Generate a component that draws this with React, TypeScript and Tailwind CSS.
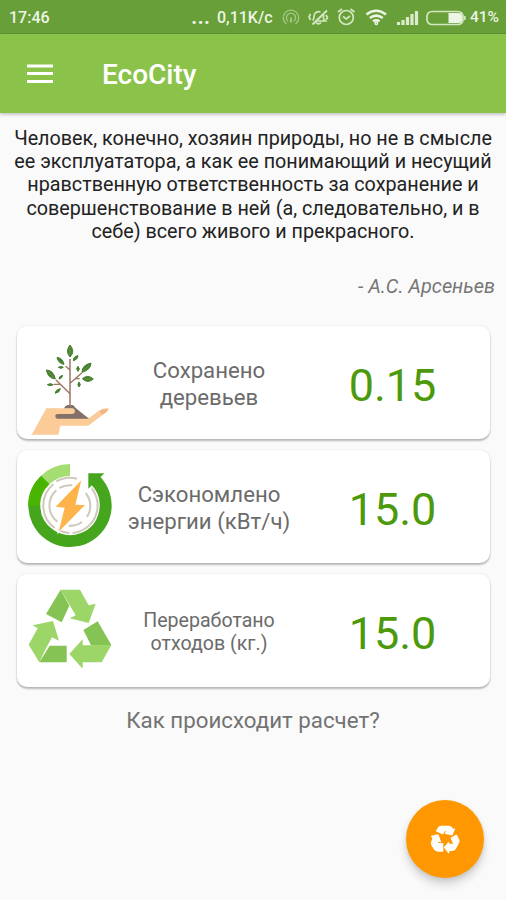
import type { ReactNode } from "react";

function StatusIcons() {
  return (
    <svg width="184" height="33" viewBox="282 0 184 33" className="shrink-0" fill="none" stroke="#d3e8c2" strokeWidth="1.7">
      {/* hotspot */}
      <g stroke="#a4ca86" strokeWidth="1.3">
        <path d="M286.500 24a7.700 7.700 0 1 1 9 0" />
        <path d="M288.300 21.500a4.600 4.600 0 1 1 5.400 0" />
        <path d="M291 17.500v5" strokeWidth="2" />
      </g>
      {/* muted bell */}
      <path d="M312.500 20.500q1.500-1 1.500-4c0-3.500 3-5.500 6.500-4.500M323.500 14.500v3.500q0 2 1.500 3h-8M316 22.500q2.500 2.500 5 0" />
      <path d="M327 10.500l-14.500 14" strokeWidth="2" />
      <path d="M310.500 14l-1.500 3 1.500 3M326 15l1.500 2.500-1.500 2.500" />
      {/* alarm clock */}
      <circle cx="346.300" cy="17.500" r="7" />
      <path d="M343 16.500l3.300 2.500 3.700-3M338 12l4-3M354.500 12l-4-3" />
      {/* wifi */}
      <g strokeWidth="2.500" stroke="#eef6e7">
        <path d="M366.500 14.500q9.500-7.500 19.500 0" />
        <path d="M369.800 18q6.300-4.800 13 0" />
        <path d="M373 21.300q3.300-2.200 6.600 0" />
        <circle cx="376.300" cy="23.300" r=".7" />
      </g>
      {/* signal */}
      <path d="M398.500 25v-3M403 25v-5M407.500 25v-8M412 25v-11M416.500 25v-14" strokeWidth="3.200" stroke="#dcecce" />
      {/* battery */}
      <rect x="427" y="11.500" width="36" height="13" rx="5" />
      <path d="M448.500 13h10q3.500 0 3.500 3v4q0 3-3.500 3h-10z" fill="#edf5e5" stroke="none" />
      <path d="M464.800 16v4" />
    </svg>
  );
}

function TreeIcon() {
  return (
    <svg width="100" height="113" viewBox="21 18 300 339" className="shrink-0">
      <path d="M109 265h78l12 7 38 23 29-23q13-8 30-7-1 10-20 21l-41 31h-84l-6 27H65z" fill="#fbcb98" />
      <path d="M270 272q12-5 24-5-1 8-19 18z" fill="#f2b483" />
      <path d="M162 265q3-9 12-10h13q5 1 9 8l41 33h-96q-5-1-5-7 0-7 8-7h42q8 0 9-7 0-9-10-10z" fill="#827069" />
      <g fill="none" stroke="#9b7460" strokeWidth="5">
        <path d="M180 117v140" stroke="#a58472" />
        <path d="M180 221l-42-41M150 193h-18M180 190l36-32M196 175l13 1M180 150l-13-11" strokeWidth="4" />
      </g>
      <g fill="#487f30" stroke="#487f30" strokeWidth="3" strokeLinejoin="round">
        <path d="M180 75c11 14 11 24 0 36-10-12-10-23 0-36" />
        <path d="M141 112q17 2 21 21-17-2-21-21M109 150q21 0 27 27-23-3-27-27" />
        <path d="M243 129q0 20-27 28 0-22 27-28M250 177q-17 15-33-1 17-14 33 1" />
        <path d="M204 107q0 11-14 15 0-13 14-15M145 142q8-5 15 0-7 6-15 0M204 139q8 8 0 15-8-8 0-15" />
        <path d="M158 166q-1 9-11 11 0-9 11-11M112 194q9-6 18 0-9 6-18 0M151 206q0 10-15 14 0-11 15-14M207 186q8 8 0 15-7-8 0-15" />
      </g>
      <path d="M180 80v25M114 155l18 18M238 135l-17 17M224 177h20" stroke="#79a45d" strokeWidth="2" />
    </svg>
  );
}

function EnergyIcon() {
  return (
    <svg width="100" height="113" viewBox="21 15 300 339" className="shrink-0">
      <g fill="none" strokeWidth="36">
        <path d="M257 107A107 107 0 1 1 73 180" stroke="#45a51d" />
        <path d="M72 182A107 107 0 0 1 107 104" stroke="#49b500" />
        <path d="M106 105A107 107 0 0 1 180 75" stroke="#a4dd71" />
      </g>
      <path d="M235 131V85h48l-15 15-14 20-7-1z" fill="#45a51d" />
      <g fill="none" stroke="#cfc8bb" strokeWidth="6">
        <path d="M139 109a83 83 0 0 1 62-8M245 130a83 83 0 0 1-57 134M178 264a83 83 0 0 1-35-10M134 249a83 83 0 0 1-4-131" />
        <path d="M148 129a61 61 0 0 1 39-8M227 144a61 61 0 0 1 4 72M216 231a61 61 0 0 1-40 11M142 230a61 61 0 0 1-3-94" />
      </g>
      <path d="M214 106l-77 79 27 3-18 72 79-80-29-1z" fill="#ffb44b" stroke="#fff" strokeWidth="5" paintOrder="stroke" />
    </svg>
  );
}

function RecycleIcon() {
  return (
    <svg width="100" height="113" viewBox="21 12 300 339" className="shrink-0">
      <g fill="#85c354">
        <path d="M152 59l26 48-23 50-47-25z" />
        <path d="M220 180l43-26 41 71-61 1z" />
        <path d="M88 277l31-50h51v50z" />
      </g>
      <g fill="#9cd669">
        <path d="M152 59h58l26 47 21-5-21 58-57-14 18-9-20-34z" />
        <path d="M304 225l-29 52h-57v19l-40-44 40-44v18z" />
        <path d="M88 277l-32-53 27-49-15-9 61-13 18 59-21-10-19 35z" />
      </g>
    </svg>
  );
}

function FabRecycle() {
  return (
    <svg width="30" height="30" viewBox="0 0 90 90" fill="#fff" stroke="#fff" strokeWidth="4" strokeLinejoin="round">
      <path d="M24 14q3-7 9-7h22q7 0 11 6l2 4 5-2-7 17-20-4 5-4-6-7-7 12-18-8z" />
      <path d="M5 37l19-4 7 20-6-3-4 9h17v22H25q-8 0-12-6L6 63q-3-6 0-11l4-9z" />
      <path d="M64 42l15-8 6 12q3 6 0 11L76 73q-3 6-10 6H56v7L44 70l12-14v5h16z" />
    </svg>
  );
}

function StatCard({ icon, lines, value, small = false }: { icon: ReactNode; lines: string[]; value: string; small?: boolean }) {
  return (
    <section className="flex h-[113px] items-center rounded-[10px] bg-white shadow-[0_2px_2px_rgba(0,0,0,0.25),0_0_2px_rgba(0,0,0,0.12)]">
      {icon}
      <div className={`w-[184px] shrink-0 pt-[2px] text-center whitespace-nowrap text-[#6b6b6b] ${small ? "text-[19.6px] leading-[23px]" : "text-[22.2px] leading-[27px]"}`}>
        {lines.map((line) => <p key={line}>{line}</p>)}
      </div>
      <strong className="w-[183px] pt-[5px] text-center text-[45px] leading-none font-normal text-[#4c9a0b]">{value}</strong>
    </section>
  );
}

const quote = [
  "Человек, конечно, хозяин природы, но не в смысле",
  "ее эксплуататора, а как ее понимающий и несущий",
  "нравственную ответственность за сохранение и",
  "совершенствование в ней (а, следовательно, и в",
  "себе) всего живого и прекрасного.",
];

export default function App() {
  return (
    <div className="flex h-[900px] w-[506px] flex-col overflow-hidden bg-[#fafafa] font-[Roboto,sans-serif]">
      <div className="flex h-[34px] shrink-0 items-center border-b border-[#5c9233] bg-[#689f38] text-[16px] font-medium text-[#edf5e6]">
        <span className="w-[181px] pl-[9px] pt-[3px]">17:46</span>
        <span className="w-[36px] pl-[10px] text-[23px] leading-none">...</span>
        <span className="w-[65px] pt-[3px] whitespace-nowrap">0,11K/c</span>
        <StatusIcons />
        <span className="pl-[4px] pt-[3px] text-[15.500px]">41%</span>
      </div>
      <header className="flex h-[79px] shrink-0 items-center bg-[#8bc34a] text-white shadow-[0_2px_3px_rgba(0,0,0,0.2)]">
        <svg width="54" height="40" viewBox="0 0 54 40" className="mr-[48px]">
          <path d="M27 12h26M27 19.500h26M27 27.500h26" stroke="white" strokeWidth="3.200" />
        </svg>
        <h1 className="pt-[3px] text-[28px] font-medium leading-none">EcoCity</h1>
      </header>
      <main className="flex flex-col px-[16px] pt-[14px]">
        <blockquote className="-mx-3 text-center text-[19.75px] leading-[23.2px] whitespace-nowrap text-[#222]">
          {quote.map((line) => <p key={line}>{line}</p>)}
        </blockquote>
        <p className="-mr-[5px] mt-[32px] text-right text-[19.9px] leading-[23px] italic text-[#777]">- А.С. Арсеньев</p>
        <div className="mt-[28px] flex flex-col gap-[11px] pl-px">
          <StatCard icon={<TreeIcon />} lines={["Сохранено", "деревьев"]} value="0.15" />
          <StatCard icon={<EnergyIcon />} lines={["Сэкономлено", "энергии (кВт/ч)"]} value="15.0" />
          <StatCard icon={<RecycleIcon />} lines={["Переработано", "отходов (кг.)"]} value="15.0" small />
        </div>
        <p className="mt-[20px] text-center text-[22.3px] leading-[27px] text-[#737373]">Как происходит расчет?</p>
      </main>
      <button className="mt-auto mr-[22px] mb-[22px] flex size-[78px] shrink-0 items-center justify-center self-end rounded-full bg-[#ff9800] shadow-[0_7px_10px_rgba(0,0,0,0.14),0_2px_4px_rgba(0,0,0,0.1)]">
        <FabRecycle />
      </button>
    </div>
  );
}
